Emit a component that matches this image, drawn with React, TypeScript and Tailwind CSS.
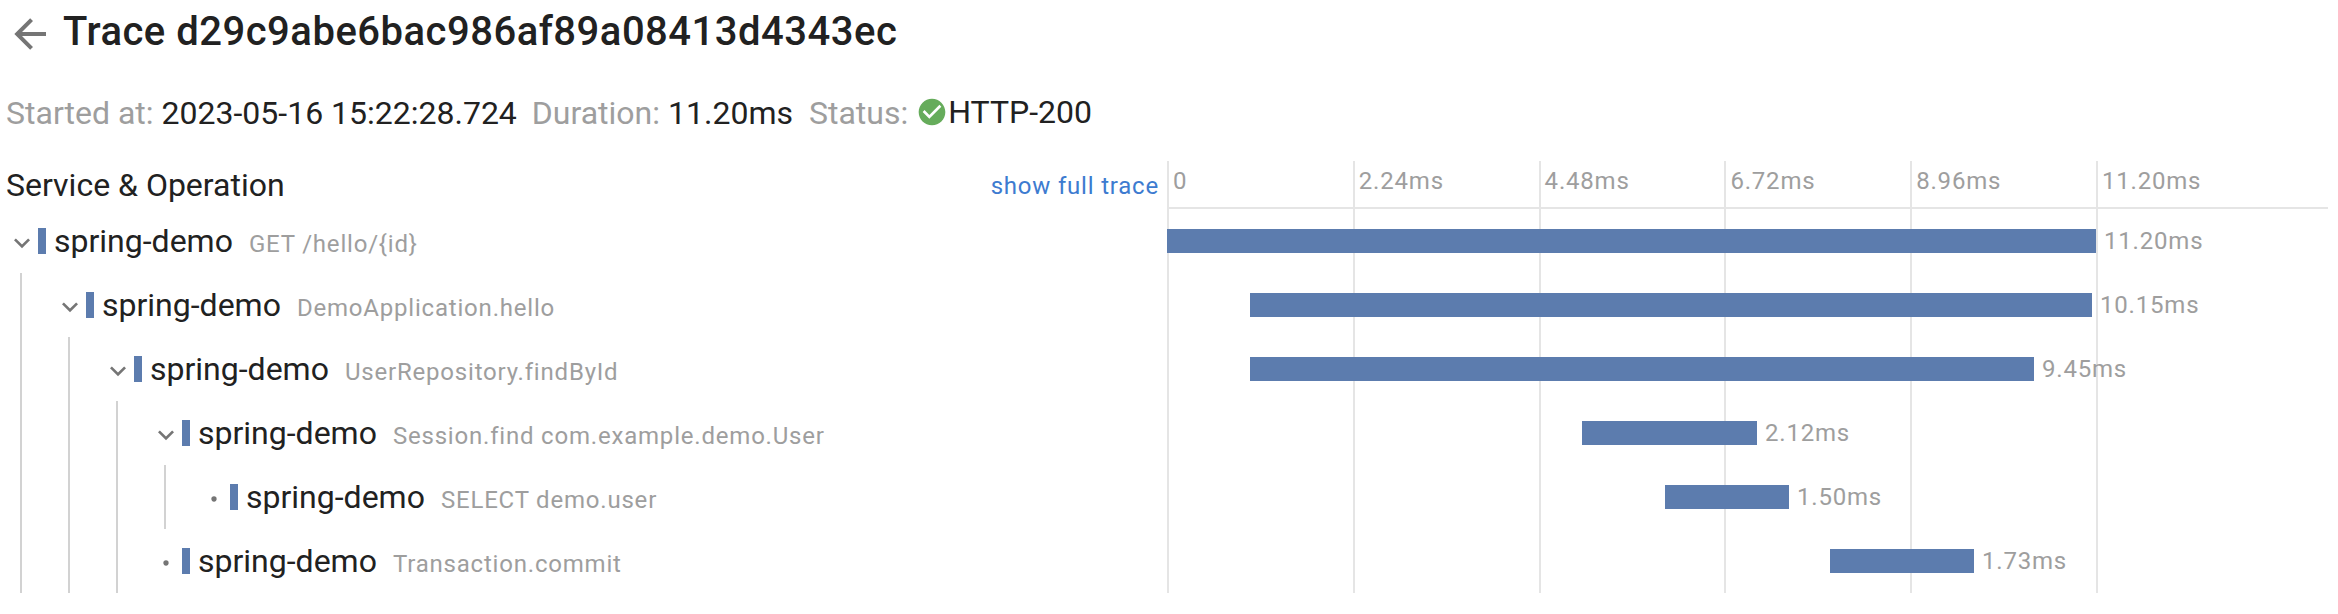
type Span = {
  depth: number;
  leaf?: boolean;
  service: string;
  operation: string;
  duration: string;
  start: number;
  width: number;
};

const service = 'spring-demo';

const spans: Span[] = [
  { depth: 0, service, operation: 'GET /hello/{id}', duration: '11.20ms', start: 0, width: 929 },
  { depth: 1, service, operation: 'DemoApplication.hello', duration: '10.15ms', start: 83, width: 842 },
  { depth: 2, service, operation: 'UserRepository.findById', duration: '9.45ms', start: 83, width: 784 },
  { depth: 3, service, operation: 'Session.find com.example.demo.User', duration: '2.12ms', start: 415, width: 175 },
  { depth: 4, leaf: true, service, operation: 'SELECT demo.user', duration: '1.50ms', start: 498, width: 124 },
  { depth: 3, leaf: true, service, operation: 'Transaction.commit', duration: '1.73ms', start: 663, width: 144 },
];

const ticks = ['0', '2.24ms', '4.48ms', '6.72ms', '8.96ms', '11.20ms'];

const ARROW = 'M20,11V13H8L13.5,18.5L12.08,19.92L4.16,12L12.08,4.08L13.5,5.5L8,11H20Z';
const CHECK =
  'M12 2C6.5 2 2 6.5 2 12S6.5 22 12 22 22 17.5 22 12 17.5 2 12 2M10 17L5 12L6.41 10.59L10 14.17L17.59 6.58L19 8L10 17Z';
const CHEVRON = 'M7.41,8.58L12,13.17L16.59,8.58L18,10L12,16L6,10L7.41,8.58Z';
const DOT = 'M12,10A2,2 0 0,0 10,12C10,13.11 10.9,14 12,14C13.11,14 14,13.11 14,12A2,2 0 0,0 12,10Z';

function Icon({ path, className }: { path: string; className: string }) {
  return (
    <svg viewBox="0 0 24 24" className={`shrink-0 fill-current ${className}`}>
      <path d={path} />
    </svg>
  );
}

function TreeRow({ span }: { span: Span }) {
  return (
    <div className="flex h-16 items-center">
      {Array.from({ length: span.depth }, (_, i) => (
        <div key={i} className="flex h-full w-12 shrink-0 pl-5">
          <div className="w-0.5 bg-[#d2d2d2]" />
        </div>
      ))}
      <Icon path={span.leaf ? DOT : CHEVRON} className="ml-1.5 mt-1 size-8 text-[#757575]" />
      <div className="h-[26px] w-2 shrink-0 bg-[#5c7cae]" />
      <span className="ml-2 text-[32px] leading-[48px]">{span.service}</span>
      <span className="ml-4 pt-1.5 text-2xl leading-10 tracking-[0.8px] text-[#9e9e9e]">{span.operation}</span>
    </div>
  );
}

export default function App() {
  return (
    <div className="h-[614px] w-[2338px] overflow-hidden whitespace-nowrap bg-white font-['Roboto',sans-serif] text-[#212121]">
      <header className="flex h-16 items-start pl-1.5">
        <Icon path={ARROW} className="mt-2.5 size-12 text-[#757575]" />
        <h1 className="ml-[9px] text-[40px] font-medium leading-[64px] tracking-[0.5px]">
          Trace d29c9abe6bac986af89a08413d4343ec
        </h1>
      </header>

      <div className="flex h-[97px] items-start pl-1.5 pt-[25px] text-[32px] leading-[48px]">
        <span className="mr-2 text-[#9e9e9e]">Started at:</span>
        <span className="mr-[15px]">2023-05-16 15:22:28.724</span>
        <span className="mr-2 text-[#9e9e9e]">Duration:</span>
        <span className="mr-4">11.20ms</span>
        <span className="mr-2 text-[#9e9e9e]">Status:</span>
        <Icon path={CHECK} className="mt-[7px] size-8 text-[#66ac5b]" />
        <span className="-mt-px">HTTP-200</span>
      </div>

      <main className="flex">
        <section className="w-[1167px]">
          <div className="flex h-12 items-start justify-between pl-1.5 pr-2">
            <span className="text-[32px] leading-[48px]">Service &amp; Operation</span>
            <a className="text-2xl leading-[50px] tracking-[0.8px] text-[#3d7bd0]">show full trace</a>
          </div>
          {spans.map((span) => (
            <TreeRow key={span.operation} span={span} />
          ))}
        </section>

        <section className="relative h-[432px] w-[1161px]">
          <div className="absolute inset-0 flex">
            {ticks.map((tick) => (
              <div
                key={tick}
                className="w-[185.8px] shrink-0 border-l-2 border-[#e5e5e5] pl-1 text-2xl leading-10 tracking-[0.8px] text-[#9e9e9e]"
              >
                {tick}
              </div>
            ))}
          </div>
          <div className="relative h-12 border-b-2 border-[#e5e5e5]" />
          {spans.map((span) => (
            <div key={span.operation} className="relative flex h-16 items-center">
              <div className="h-6 shrink-0 bg-[#5c7cae]" style={{ marginLeft: span.start, width: span.width }} />
              <span className="ml-2 text-2xl leading-10 tracking-[0.8px] text-[#9e9e9e]">{span.duration}</span>
            </div>
          ))}
        </section>
      </main>
    </div>
  );
}
